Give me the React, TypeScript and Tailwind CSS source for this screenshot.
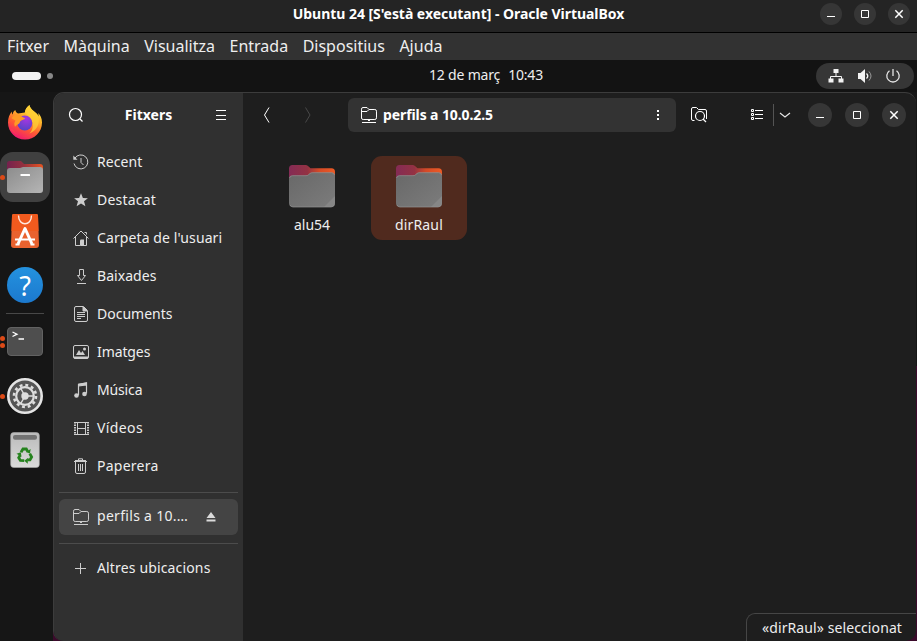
import React from 'react';

const ui = "font-['Noto_Sans','Open_Sans',sans-serif]";

function TitleButton({ kind, size }: { kind: 'min' | 'max' | 'close'; size: string }) {
  return (
    <button className={`flex shrink-0 items-center justify-center rounded-full bg-[#363636] ${size}`}>
      <svg width="10" height="10" viewBox="0 0 10 10" fill="none" stroke="#fff">
        {kind === 'min' && <path d="M1 7.5h8" />}
        {kind === 'max' && <path d="M1.5 1.5h7v7h-7z" />}
        {kind === 'close' && <path d="M1.3 1.3l7.4 7.4M8.7 1.3L1.3 8.7" strokeWidth="1.5" />}
      </svg>
    </button>
  );
}

function Icon({ children, className = '' }: { children: React.ReactNode; className?: string }) {
  return (
    <svg width="16" height="16" viewBox="0 0 16 16" fill="none" stroke="#cdcdcd" className={`shrink-0 ${className}`}>
      {children}
    </svg>
  );
}

const RemoteFolder = ({ color = '#cdcdcd' }: { color?: string }) => (
  <Icon>
    <g stroke={color}>
      <path d="M.5 11V2.2Q.5.5 2 .5h4l2 2h5.8q1.7 0 1.7 1.7v6.6q0 1.7-1.7 1.7H2.2Q.5 12.500.5 11z" />
      <path d="M.5 4.500h5.500l2-2" />
      <path d="M1 15.500h14M7 13.500h2" />
    </g>
  </Icon>
);

const places: { label: string; track: string; icon: React.ReactNode }[] = [
  {
    label: 'Recent', track: 'tracking-[0.1px]',
    icon: <Icon><path d="M1.700 4.500A7 7 0 1 1 1 9.500" /><path d="M8 4v4.500l2.500 2.500" /><path d="M.3 1.500v4.200h4.200z" fill="#cdcdcd" stroke="none" /></Icon>,
  },
  {
    label: 'Destacat', track: 'tracking-[0.2px]',
    icon: <Icon><path d="M8 1.200l1.900 4.800 5 .2-3.900 3.100 1.400 4.900L8 11.400l-4.400 2.800L5 9.300 1.100 6.200l5-.2z" fill="#cdcdcd" stroke="none" /></Icon>,
  },
  {
    label: "Carpeta de l'usuari", track: 'tracking-[0.1px]',
    icon: <Icon><path d="M.5 8.500L8 1l7.500 7.500M2.500 7v8.500h5V10.500h3M13.500 7v8.500h-3M11.500 2.500h2v2" /><path d="M7.500 9.500h3.500V16H7.500z" fill="#cdcdcd" stroke="none" /></Icon>,
  },
  {
    label: 'Baixades', track: 'tracking-[0.05px]',
    icon: <Icon><path d="M6.500 1.500h4v6h2l-4 5-4-5h2zM4 15.500h9" /></Icon>,
  },
  {
    label: 'Documents', track: 'tracking-[0px]',
    icon: <Icon><path d="M1.500 2Q1.500.5 3 .5h7.500l4 4V14q0 1.500-1.500 1.500H3Q1.500 15.500 1.500 14zM4 6.500h8M4 8.500h8M4 10.500h8M4 12.500h4" /><path d="M10 1v4h4z" fill="#cdcdcd" /></Icon>,
  },
  {
    label: 'Imatges', track: 'tracking-[-0.1px]',
    icon: <Icon><rect x=".5" y="1.500" width="15" height="13" rx="1.500" /><path d="M1 13.500h14" strokeWidth="2" /><path d="M3 11l3-5 2 3 1.500-2L12 11z" fill="#cdcdcd" stroke="none" /><circle cx="11.500" cy="5" r="1.500" fill="#cdcdcd" stroke="none" /></Icon>,
  },
  {
    label: 'Música', track: 'tracking-[-0.15px]',
    icon: <Icon><path d="M5.500 13V2.500l8-1.500v10.500M5.500 4l8-1.200" strokeWidth="1.200" /><path d="M5 1.800l9-1.500v2.500L5 4z" fill="#cdcdcd" stroke="none" /><circle cx="3.500" cy="13.500" r="2.300" fill="#cdcdcd" stroke="none" /><circle cx="11.500" cy="12" r="2.300" fill="#cdcdcd" stroke="none" /></Icon>,
  },
  {
    label: 'Vídeos', track: 'tracking-[0.4px]',
    icon: <Icon><path d="M1 2.500h15M1 14.500h15M4.500 2.500v12M12.500 2.500v12M4.500 8.500h8" /><path d="M2 2v13M15 2v13" strokeWidth="2" strokeDasharray="1.500 1" /></Icon>,
  },
  {
    label: 'Paperera', track: 'tracking-[0.25px]',
    icon: <Icon><path d="M1 3.500h13M5.500 3V.8h4V3M2.500 4v10q0 1.500 1.500 1.500h7q1.500 0 1.500-1.500V4M5.500 6v7M7.500 6v7M9.500 6v7" /><path d="M2 2.500h11" /></Icon>,
  },
];

function DockCell({ children, dots = 0, active = false }: { children: React.ReactNode; dots?: number; active?: boolean }) {
  return (
    <div className="relative flex h-[54px] w-[50px] shrink-0 items-center justify-center">
      <div className={`flex h-[50px] w-[50px] items-center justify-center rounded-[13px] ${active ? 'bg-[#404040]' : ''}`}>{children}</div>
      <div className="absolute left-0 top-0 flex h-full flex-col items-center justify-center gap-[2px]">
        {dots > 0 && <span className="h-[5px] w-[5px] rounded-full bg-[#dc4a17]" />}
        {dots > 1 && <span className="h-[5px] w-[5px] rounded-full bg-[#dc4a17]" />}
      </div>
    </div>
  );
}

function Firefox() {
  return (
    <svg width="36" height="36" viewBox="0 0 36 36">
      <defs>
        <linearGradient id="fx" x1=".8" y1="0" x2=".3" y2="1">
          <stop offset="0" stopColor="#fff040" /><stop offset=".35" stopColor="#ffb52a" /><stop offset=".65" stopColor="#ff5a32" /><stop offset="1" stopColor="#ee1575" />
        </linearGradient>
        <radialGradient id="fg" cx=".6" cy=".2" r=".8"><stop offset="0" stopColor="#a936e2" /><stop offset="1" stopColor="#5843c7" /></radialGradient>
      </defs>
      <path d="M22.500 0c-3 2-4.500 5-4.700 7.500L11 8.500C9 7.500 8.500 6 8.300 5 6.500 6 5.800 8 5.800 9.500 5 9 4.700 7.500 4.800 6.500 2.500 9 1 13 1 17.500 1 27 8.500 34.500 18 34.500S35 27 35 17.500c0-4-1.500-7.500-4-9.500l1 3.500C30 7 23 5 22.500 0z" fill="url(#fx)" />
      <path d="M22.500 0c.5 5 7 7 9 12 1.500 7-2 14-9 16.500 5-5 4-12 0-16L18 7.500C18.200 5 19.500 2 22.500 0z" fill="#ffcf35" opacity=".75" />
      <circle cx="17.800" cy="18" r="7.500" fill="url(#fg)" />
      <path d="M4.500 13c3-4 6-4 8-3 2 1 3 2.500 5.500 3 0 2-4.500 1.800-5 4-1 3-3.500 2-5 5-1-3-1-4 .5-6.500-1.500-.8-3-1.500-4-2.500z" fill="#ff9a25" />
      <path d="M2 22c5 9 16 12 24 6-4 5-16 5-19-3-2-1-4-1.500-5-3z" fill="#ff4050" opacity=".6" />
    </svg>
  );
}

function FilesApp() {
  return (
    <svg width="36" height="34" viewBox="0 0 36 34">
      <defs>
        <linearGradient id="fa"><stop offset="0" stopColor="#75214e" /><stop offset=".45" stopColor="#93303f" /><stop offset="1" stopColor="#e95420" /></linearGradient>
        <linearGradient id="fb" x2="1" y2="1"><stop offset="0" stopColor="#8c8c8c" /><stop offset="1" stopColor="#b5b5b5" /></linearGradient>
      </defs>
      <path d="M0 12V3.500Q0 1 2.500 1H14l3 3h16q3 0 3 3v6H0z" fill="url(#fa)" />
      <path d="M0 11q0-3 3-3h10l3-1h17q3 0 3 3v20q0 3-3 3H3q-3 0-3-3z" fill="url(#fb)" />
      <rect x="13.500" y="14" width="9.500" height="2" rx=".5" fill="#fff" />
    </svg>
  );
}

function StoreApp() {
  return (
    <svg width="28" height="34" viewBox="0 0 28 34">
      <path d="M2.500 0h23Q27 0 27 2l1 29q0 3-3 3H3q-3 0-3-3L1 2Q1 0 2.500 0z" fill="#e9622f" />
      <path d="M2.500 0h23Q27 0 27 2l.5 15H.5L1 2Q1 0 2.500 0z" fill="#f05a1e" />
      <path d="M7.500 1.500c0 11 13 11 13 0" fill="none" stroke="#ffe9df" strokeWidth="1.400" />
      <path d="M7 30l7-15.500L21 30" fill="none" stroke="#fff" strokeWidth="3" strokeLinejoin="round" />
      <path d="M4 25.500h20M4.500 30.500h4M19.500 30.500h4" stroke="#fff" strokeWidth="2" />
    </svg>
  );
}

function TerminalApp() {
  return (
    <div className="mb-px flex h-[29px] w-9 rounded-[4px] border border-[#626262] bg-[#4e4e4e] pl-1 pt-[3px] shadow-sm">
      <svg width="13" height="10" viewBox="0 0 13 10" fill="none" stroke="#fff" strokeWidth="1.300"><path d="M.5 1L5 3.200.5 5.500M6.500 8h5.500" /></svg>
    </div>
  );
}

function SettingsApp() {
  return (
    <svg width="36" height="36" viewBox="0 0 36 36" fill="none">
      <circle cx="18" cy="18" r="16.700" fill="#555" stroke="#e4e4e4" strokeWidth="2.600" />
      <circle cx="18" cy="18" r="11" stroke="#dedede" strokeWidth="2.600" strokeDasharray="2.880 2.880" />
      <circle cx="18" cy="18" r="8.800" stroke="#dedede" strokeWidth="2.200" />
      <circle cx="18" cy="18" r="3.700" fill="#dedede" />
      <path d="M18 18h9M18 18l-4.500-8M18 18l-4.500 8" stroke="#dedede" strokeWidth="1.500" />
    </svg>
  );
}

function TrashApp() {
  return (
    <svg width="30" height="36" viewBox="0 0 30 36">
      <defs><linearGradient id="tr" x2="0" y2="1"><stop offset="0" stopColor="#bababa" /><stop offset="1" stopColor="#dadada" /></linearGradient></defs>
      <rect x=".7" y=".5" width="28.600" height="35" rx="3" fill="url(#tr)" stroke="#aaa" strokeWidth=".6" />
      <rect x="3" y="3" width="24" height="4.800" rx="2" fill="#727272" />
      <g fill="none" stroke="#26831e" strokeWidth="2.800">
        {[0, 120, 240].map((r) => (
          <g key={r} transform={`rotate(${r} 15 23.500)`}>
            <path d="M11 20.300l2-3.300h3.300l1.400 2.400" />
            <path d="M20.700 17l-.8 4.500-4.200-1.600z" fill="#26831e" stroke="none" />
          </g>
        ))}
      </g>
    </svg>
  );
}

function Folder({ id }: { id: string }) {
  return (
    <svg width="46" height="43" viewBox="0 0 46 43">
      <defs>
        <linearGradient id={id + 'a'}><stop offset="0" stopColor="#842b55" /><stop offset=".4" stopColor="#933243" /><stop offset=".65" stopColor="#d44a27" /><stop offset="1" stopColor="#ed5b25" /></linearGradient>
        <linearGradient id={id + 'b'} x2="1" y2="1"><stop offset="0" stopColor="#686868" /><stop offset="1" stopColor="#7c7c7c" /></linearGradient>
      </defs>
      <path d="M0 15V3.500Q0 0 3.500 0h13q1.500 0 2.500 1l2.500 2.300h21Q46 3.300 46 7v8z" fill={`url(#${id}a)`} />
      <path d="M0 38V14q0-3.500 3.500-3.500H17q1.500 0 2.300-.8l1.700-1.400q1-.8 2.200-.8h19.300Q46 7.500 46 11v27q0 4-4 4H4q-4 0-4-4z" fill={`url(#${id}b)`} />
      <path d="M.5 13q.5-2.300 3-2.300H17q1.500 0 2.300-.8l1.700-1.400q1-.8 2.200-.8h19.300q2.500 0 3 2.300" fill="none" stroke="#999" strokeWidth=".6" />
      <path d="M46 31L35 42h7q4 0 4-4z" fill="#8b8b8b" opacity=".7" />
      <path d="M1 40q1 2 3 2h38q2 0 3-2" fill="none" stroke="#929292" strokeWidth=".7" />
    </svg>
  );
}

export default function App() {
  return (
    <div className={`flex h-[641px] w-[917px] flex-col overflow-hidden bg-[#131313] text-[#eee] ${ui}`}>
      <header className="flex h-[33px] shrink-0 items-start border-b border-black bg-[#242424]">
        <div className="w-[97px] shrink-0" />
        <h1 className="h-7 flex-1 whitespace-nowrap text-center text-[14px] font-bold leading-7 tracking-[-0.04px] text-white">Ubuntu 24 [S'està executant] - Oracle VirtualBox</h1>
        <div className="flex w-[97px] shrink-0 gap-3 pt-[3px]">
          <TitleButton kind="min" size="size-[22px]" />
          <TitleButton kind="max" size="size-[22px]" />
          <TitleButton kind="close" size="size-[22px]" />
        </div>
      </header>

      <nav className="flex h-[27px] shrink-0 items-center gap-[14.5px] bg-[#323232] pl-[7px] text-[16px] leading-[27px]">
        {['Fitxer', 'Màquina', 'Visualitza', 'Entrada', 'Dispositius', 'Ajuda'].map((m) => <span key={m}>{m}</span>)}
      </nav>

      <div className="flex h-8 shrink-0 items-center justify-between">
        <div className="flex w-[101px] items-center gap-[6px] pl-3">
          <span className="h-2 w-[29px] rounded-full bg-[#f2f2f2]" />
          <span className="h-[6px] w-[6px] rounded-full bg-[#888]" />
        </div>
        <div className="flex gap-2 whitespace-nowrap pb-[2px] pl-[55px] text-[14px] leading-[30px] tracking-[-0.18px]"><span>12 de març</span><span>10:43</span></div>
        <div className="mr-[3px] flex h-[26px] w-[98px] items-center gap-[13px] rounded-full bg-[#363636] pl-3">
          <Icon><path d="M8 4v5M2.500 12V8.500h11V12" stroke="#f2f2f2" /><path d="M5.500 1h5v4h-5zM.5 10.500h5v4h-5zM10.500 10.500h5v4h-5z" fill="#f2f2f2" stroke="none" /></Icon>
          <Icon><path d="M1 5h2.500L8 1v14l-4.500-4H1z" fill="#f2f2f2" stroke="none" /><path d="M9.500 5.500q2.500 2.500 0 5" stroke="#f2f2f2" strokeWidth="1.300" /><path d="M12 3.500q4 4.500 0 9" stroke="#999" /></Icon>
          <Icon className="-ml-px"><path d="M4.500 2.700a6.200 6.200 0 1 0 7 0M8 1v7" stroke="#e5e5e5" strokeWidth="1.300" /></Icon>
        </div>
      </div>

      <div className="flex min-h-0 flex-1 bg-gradient-to-b from-[#161616] from-50% to-[#3b0a2b] to-50%">
        <aside className="flex w-[53px] shrink-0 flex-col bg-[#161616] pt-1">
          <DockCell><Firefox /></DockCell>
          <DockCell dots={1} active><FilesApp /></DockCell>
          <DockCell><StoreApp /></DockCell>
          <DockCell>
            <div className="flex size-9 items-center justify-center rounded-full bg-gradient-to-b from-[#2492df] to-[#1c79ce] font-['Noto_Sans',sans-serif] text-[27px] leading-none text-white">?</div>
          </DockCell>
          <div className="mx-[6px] mb-px mt-px h-px w-[38px] shrink-0 bg-[#484848]" />
          <DockCell dots={2}><TerminalApp /></DockCell>
          <DockCell dots={1}><SettingsApp /></DockCell>
          <DockCell><TrashApp /></DockCell>
        </aside>

        <main className="flex w-[863px] overflow-hidden rounded-b-[10px] rounded-t-[11px] border-l border-t border-[#3c3c3c] bg-[#1e1e1e]">
          <section className="flex w-[189px] shrink-0 flex-col bg-[#303030]">
            <div className="flex h-11 shrink-0 items-center justify-between pl-[14px] pr-[14px]">
              <Icon><circle cx="7.500" cy="7.500" r="6" stroke="#fff" strokeWidth="1.200" /><path d="M12 12l2.500 2.500" stroke="#fff" strokeWidth="1.300" /></Icon>
              <h2 className="text-[14px] font-bold leading-5 text-white">Fitxers</h2>
              <Icon><path d="M3 3.500h10M3 8.500h10M3 12.500h10" stroke="#fff" /></Icon>
            </div>
            <ul className="pt-[6px]">
              {places.map((p) => (
                <li key={p.label} className="flex h-[38px] items-center gap-2 pl-[19px]">
                  {p.icon}
                  <span className={`whitespace-nowrap text-[14px] leading-5 ${p.track}`}>{p.label}</span>
                </li>
              ))}
            </ul>
            <hr className="mx-[5px] mt-[7px] border-[#4c4c4c]" />
            <div className="mx-[5px] my-[6px] flex h-9 shrink-0 items-center gap-2 rounded-md bg-[#444] pl-[14px] pr-[21px]">
              <RemoteFolder />
              <span className="flex-1 whitespace-nowrap pb-[2px] text-[14px] leading-5 tracking-[0.3px]">perfils a 10.…</span>
              <svg width="12" height="12" viewBox="0 0 12 12" fill="#dadada"><path d="M6 1l4.500 6h-9zM1.500 8.500h9v2h-9z" /></svg>
            </div>
            <hr className="mx-[5px] mt-[2px] border-[#4c4c4c]" />
            <div className="flex h-[49px] items-center gap-2 pl-[19px]">
              <Icon><path d="M7.500 2v11M2 7.500h11" /></Icon>
              <span className="whitespace-nowrap pb-[2px] text-[14px] leading-5 tracking-[0.15px]">Altres ubicacions</span>
            </div>
          </section>

          <section className="flex min-w-0 flex-1 flex-col">
            <div className="flex h-11 shrink-0 items-center">
              <svg className="ml-[18px]" width="10" height="18" viewBox="0 0 10 18" fill="none" stroke="#fff"><path d="M8 1.500L3.500 9 8 16.500" /></svg>
              <svg className="ml-[31px]" width="10" height="18" viewBox="0 0 10 18" fill="none" stroke="#484848"><path d="M3.500 1.500L8 9l-4.500 7.500" /></svg>
              <div className="ml-9 flex h-[34px] w-[328px] items-center gap-[6px] rounded-md bg-[#333] pl-[13px]">
                <RemoteFolder color="#fff" />
                <span className="flex-1 text-[14px] font-bold leading-5 tracking-[-0.1px] text-white">perfils a 10.0.2.5</span>
                <svg className="mr-[13px]" width="10" height="12" viewBox="0 0 10 12" fill="#fff"><path d="M4 1h2v2H4zM4 5h2v2H4zM4 9h2v2H4z" /></svg>
              </div>
              <Icon className="ml-[15px]"><path d="M3.500 13.500H2Q.5 13.500.5 12V2Q.5.5 2 .5h3.500l2 2H14q1.500 0 1.500 1.500v8" stroke="#fff" /><circle cx="9" cy="9" r="4.500" stroke="#fff" strokeWidth="1.200" /><path d="M12 12l3 3" stroke="#fff" strokeWidth="1.300" /></Icon>
              <svg className="ml-[43px]" width="14" height="12" viewBox="0 0 14 12" fill="none" stroke="#fff"><path d="M1.500.5h2v2h-2zM1.500 4.500h2v2h-2zM1.500 8.500h2v2h-2zM5 1.500h8M5 5.500h8M5 9.500h8" /></svg>
              <span className="ml-[9px] h-[22px] w-px bg-[#545454]" />
              <svg className="ml-[5px]" width="12" height="8" viewBox="0 0 12 8" fill="none" stroke="#e5e5e5" strokeWidth="1.200"><path d="M1 2l5 4 5-4" /></svg>
              <div className="ml-[17px] flex gap-[13px]">
                <TitleButton kind="min" size="size-6" />
                <TitleButton kind="max" size="size-6" />
                <TitleButton kind="close" size="size-6" />
              </div>
            </div>
            <div className="flex flex-1 items-start gap-[11px] pl-[21px] pt-[19px]">
              <div className="flex h-[84px] w-24 flex-col items-center rounded-[11px] pt-[9px] text-[14px] leading-5"><Folder id="a" /><span className="mt-[7px]">alu54</span></div>
              <div className="flex h-[84px] w-24 flex-col items-center rounded-[11px] bg-[#502a1e] pt-[9px] text-[14px] leading-5"><Folder id="b" /><span className="mt-[7px] tracking-[0.15px]">dirRaul</span></div>
            </div>
            <div className="h-7 w-[170px] self-end rounded-tl-[9px] border-l border-t border-[#464646] pl-[15px] text-[14px] leading-[28px] tracking-[0.1px]"><span className="whitespace-nowrap">«dirRaul» seleccionat</span></div>
          </section>
        </main>
      </div>
    </div>
  );
}
